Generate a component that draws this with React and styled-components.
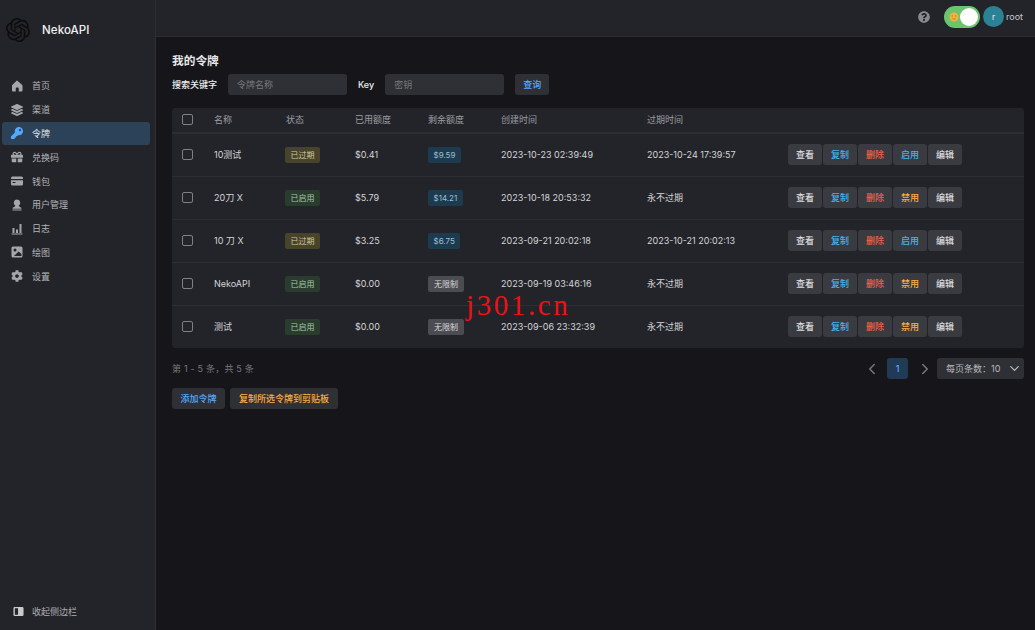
import React from 'react';
import styled, { createGlobalStyle } from 'styled-components';
import { SiOpenai } from 'react-icons/si';
import { FaLayerGroup, FaKey, FaGift, FaCog, FaQuestionCircle } from 'react-icons/fa';
import { ChevronLeft, ChevronRight, ChevronDown } from 'lucide-react';

const Global = createGlobalStyle`
  html, body { margin: 0; padding: 0; background: #16161a; }
  body { font-family: Inter, "Noto Sans CJK SC", sans-serif; -webkit-font-smoothing: antialiased; }
  * { box-sizing: border-box; }
`;
const Page = styled.div`display: flex; width: 1035px; height: 630px; overflow: hidden; position: relative; background: #16161a;`;
const Sidebar = styled.aside`width: 156px; flex: none; height: 100%; background: #232429; border-right: 1px solid #2e2f34; display: flex; flex-direction: column;`;
const Brand = styled.div`height: 74px; padding: 0 0 14px 6px; display: flex; align-items: center; gap: 12px; color: #f0f0f2; font-size: 11.5px; font-weight: 500; letter-spacing: .1px;`;
const Menu = styled.nav`padding: 0 5px 0 2px; display: flex; flex-direction: column;`;
const Item = styled.div`height: 23.8px; border-radius: 3px; display: flex; align-items: center; gap: 9px; padding-left: 9px; font-size: 9px; color: ${p => p.$active ? '#e4e6ea' : '#b4b5b8'}; background: ${p => p.$active ? '#2c4259' : 'transparent'};
  svg { width: 12px; height: 12px; flex: none; color: ${p => p.$active ? '#54a9ff' : '#a5a6a9'}; fill: currentColor; }`;
const Collapse = styled.div`margin-top: auto; height: 38px; padding-left: 13px; display: flex; align-items: center; gap: 8px; font-size: 9px; color: #aeafb2;
  svg { width: 11px; height: 11px; flex: none; fill: #c9cacc; }`;
const Body = styled.div`flex: 1; min-width: 0; display: flex; flex-direction: column;`;
const Header = styled.header`height: 37px; flex: none; background: #232429; border-bottom: 1px solid #2b2c31; display: flex; align-items: center; justify-content: flex-end; padding: 0 12px 3px 0; color: #c9cacc; font-size: 9px;`;
const Help = styled.span`display: flex; color: #8a8b8f; margin-right: 14px; font-size: 12px;`;
const Toggle = styled.div`position: relative; width: 36px; height: 22px; border-radius: 11px; background: #6cc46e; margin-right: 3px;`;
const Knob = styled.span`position: absolute; right: 2px; top: 2px; width: 18px; height: 18px; border-radius: 50%; background: #fff;`;
const Sun = styled.svg`position: absolute; left: 5px; top: 6px; width: 10px; height: 10px;`;
const Avatar = styled.div`width: 21px; height: 21px; border-radius: 50%; background: #2a8294; color: #e8eef0; display: flex; align-items: center; justify-content: center; font-size: 8.5px; margin-right: 2px;`;
const Main = styled.main`padding: 11px 11px 0 16px;`;
const Title = styled.h1`margin: 0 0 4px; height: 22px; display: flex; align-items: center; font-size: 11.7px; font-weight: 600; color: #e8e8ea;`;
const Search = styled.div`display: flex; align-items: center; height: 21px; margin-bottom: 13px;`;
const Label = styled.label`font-size: 9px; font-weight: 500; color: #eeeef0; margin-right: ${p => p.$gap}px;`;
const Field = styled.div`width: 119px; height: 21px; border-radius: 3px; background: #2f3035; color: #77787c; font-size: 9px; padding-left: 9px; display: flex; align-items: center; margin-right: ${p => p.$gap}px;`;
const Btn = styled.button`height: 21px; border: 0; border-radius: 3px; padding: 0 ${p => p.$pad || 8}px; font: 500 9px Inter, "Noto Sans CJK SC", sans-serif; background: ${p => p.$bg || '#2f3035'}; color: ${p => p.$c || '#54a9ff'}; display: inline-flex; align-items: center; justify-content: center;`;
const Table = styled.div`background: #232429; border-radius: 3px; overflow: hidden;`;
const Row = styled.div`display: grid; grid-template-columns: 32px 72px 69px 73px 73px 146px 141px 1fr; align-items: center; height: ${p => p.$head ? 25.5 : 43}px; padding-left: 10px; font-size: 9px; color: ${p => p.$head ? '#9c9da1' : '#d4d5d7'}; border-bottom: ${p => p.$head ? '2px solid #2d2e33' : '1px solid #2d2e33'};
  &:last-child { border-bottom: 0; height: 42.5px; }`;
const Check = styled.span`display: block; width: 11px; height: 11px; border-radius: 2px; border: 1px solid #7f8084;`;
const Badge = styled.span`display: inline-flex; align-items: center; justify-content: center; height: 16px; border-radius: 2px; padding: 0 ${p => p.$pad || 5.5}px; font-size: 8px; margin-left: ${p => p.$flush ? 0 : -1}px; background: ${p => p.$bg}; color: ${p => p.$c};`;
const Actions = styled.div`display: flex; gap: 1px;`;
const Act = styled.button`width: 34px; height: 21px; border: 0; padding: 0; border-radius: 3px; background: #3a3b40; color: ${p => p.$c}; font: 500 9px Inter, "Noto Sans CJK SC", sans-serif;`;
const Pager = styled.div`display: flex; align-items: center; justify-content: space-between; margin-top: 10px; height: 21px;`;
const Count = styled.span`font-size: 9px; color: #77787c; letter-spacing: .2px;`;
const Pages = styled.div`display: flex; align-items: center; color: #77787c; font-size: 8px;`;
const Arrow = styled.span`display: flex; width: 11px; justify-content: center; margin: ${p => p.$m}; svg { flex: none; }`;
const Current = styled.span`width: 21px; height: 21px; border-radius: 3px; background: #213a55; color: #54a9ff; font-size: 9px; font-weight: 500; display: flex; align-items: center; justify-content: center;`;
const Size = styled.div`width: 87px; height: 21px; border-radius: 3px; background: #2f3035; color: #b9babd; font-size: 9px; display: flex; align-items: center; justify-content: space-between; padding: 0 2px 0 9px; svg { color: #b9babd; }`;
const Footer = styled.div`display: flex; gap: 5px; margin-top: 9px;`;
const Mark = styled.div`position: absolute; left: 466px; top: 289px; font: 29px "Liberation Serif", serif; letter-spacing: 2.6px; color: #ee1016; white-space: nowrap;`;

const Home = () => <svg viewBox="0 0 24 24"><path d="M10.600 1.800a2 2 0 0 1 2.800 0l9 8.400c.4.4.6.900.6 1.500V21a2 2 0 0 1-2 2h-5.500v-6.500a1.500 1.500 0 0 0-1.500-1.500h-3A1.500 1.500 0 0 0 9.500 16.500V23H4a2 2 0 0 1-2-2v-9.300c0-.6.2-1.100.6-1.500z"/></svg>;
const Bars = () => <svg viewBox="0 0 24 24"><path d="M1 21h22v2H1zM3 10h4v10H3zM10 13h4v7h-4zM17 2h4v18h-4z"/></svg>;
const Card = () => <svg viewBox="0 0 24 24"><path fillRule="evenodd" d="M3 3h18a3 3 0 0 1 3 3v2H0V6a3 3 0 0 1 3-3zM0 10.500h24V18a3 3 0 0 1-3 3H3a3 3 0 0 1-3-3zm3 3.500v2h6v-2z"/></svg>;
const Person = () => <svg viewBox="0 0 24 24"><path d="M12 1a6.500 6.500 0 0 1 3.600 11.900c-.3 1.300.2 2.100 1.400 2.600 2 .6 4 1.500 4 4H3c0-2.500 2-3.400 4-4 1.200-.5 1.700-1.300 1.400-2.600A6.500 6.500 0 0 1 12 1zM3 21h18v2.200H3z"/></svg>;
const Pic = () => <svg viewBox="0 0 24 24"><path fillRule="evenodd" d="M4 1h16a3 3 0 0 1 3 3v16a3 3 0 0 1-3 3H4a3 3 0 0 1-3-3V4a3 3 0 0 1 3-3zm4 4a3 3 0 1 0 0 6 3 3 0 0 0 0-6zm7 6-9 9h15v-4z"/></svg>;
const Split = () => <svg viewBox="0 0 24 24"><path fillRule="evenodd" d="M4 2h16a3 3 0 0 1 3 3v14a3 3 0 0 1-3 3H4a3 3 0 0 1-3-3V5a3 3 0 0 1 3-3zm0 3v14h7V5z"/></svg>;

const menu = [
  [<Home />, '首页'], [<FaLayerGroup />, '渠道'], [<FaKey />, '令牌', true], [<FaGift />, '兑换码'],
  [<Card />, '钱包'], [<Person />, '用户管理'], [<Bars />, '日志'], [<Pic />, '绘图'], [<FaCog />, '设置'],
];
const Y = ['已过期', '#48432b', '#d3ca98'];
const G = ['已启用', '#2a3c2e', '#a8c8ab'];
const rows = [
  ['10测试', Y, '$0.41', '$9.59', '2023-10-23 02:39:49', '2023-10-24 17:39:57', '启用'],
  ['20刀 X', G, '$5.79', '$14.21', '2023-10-18 20:53:32', '永不过期', '禁用'],
  ['10 刀 X', Y, '$3.25', '$6.75', '2023-09-21 20:02:18', '2023-10-21 20:02:13', '启用'],
  ['NekoAPI', G, '$0.00', null, '2023-09-19 03:46:16', '永不过期', '禁用'],
  ['测试', G, '$0.00', null, '2023-09-06 23:32:39', '永不过期', '禁用'],
];

export default function App() {
  return (
    <Page>
      <Global />
      <Sidebar>
        <Brand><SiOpenai size={24} color="#0c0c0e" />NekoAPI</Brand>
        <Menu>
          {menu.map(([icon, text, active]) => <Item key={text} $active={active}>{icon}{text}</Item>)}
        </Menu>
        <Collapse><Split />收起侧边栏</Collapse>
      </Sidebar>
      <Body>
        <Header>
          <Help><FaQuestionCircle /></Help>
          <Toggle>
            <Sun viewBox="0 0 20 20"><circle cx="10" cy="10" r="9" fill="#f2b23e" /><path d="M5 8h3M12 8h3M7 13c2 1.500 4 1.500 6 0" stroke="#a86a1c" strokeWidth="1.500" fill="none" /></Sun>
            <Knob />
          </Toggle>
          <Avatar>r</Avatar>
          root
        </Header>
        <Main>
          <Title>我的令牌</Title>
          <Search>
            <Label $gap={11}>搜索关键字</Label>
            <Field $gap={11}>令牌名称</Field>
            <Label $gap={11}>Key</Label>
            <Field $gap={11}>密钥</Field>
            <Btn>查询</Btn>
          </Search>
          <Table>
            <Row $head>
              <Check /><span>名称</span><span>状态</span><span>已用额度</span><span>剩余额度</span><span>创建时间</span><span>过期时间</span><span />
            </Row>
            {rows.map(r => (
              <Row key={r[0]}>
                <Check />
                <span>{r[0]}</span>
                <span><Badge $bg={r[1][1]} $c={r[1][2]}>{r[1][0]}</Badge></span>
                <span>{r[2]}</span>
                <span>{r[3] ? <Badge $flush $bg="#1d3a4e" $c="#9cc0d4">{r[3]}</Badge> : <Badge $flush $pad={6} $bg="#4b4c52" $c="#d8d8da">无限制</Badge>}</span>
                <span>{r[4]}</span>
                <span>{r[5]}</span>
                <Actions>
                  <Act $c="#dcdcde">查看</Act>
                  <Act $c="#40b4f3">复制</Act>
                  <Act $c="#f0624c">删除</Act>
                  <Act $c={r[6] === '启用' ? '#40b4f3' : '#ffae43'}>{r[6]}</Act>
                  <Act $c="#dcdcde">编辑</Act>
                </Actions>
              </Row>
            ))}
          </Table>
          <Pager>
            <Count>第 1 - 5 条，共 5 条</Count>
            <Pages>
              <Arrow $m="0 10px 0 0"><ChevronLeft size={18} /></Arrow>
              <Current>1</Current>
              <Arrow $m="0 7px 0 11px"><ChevronRight size={18} /></Arrow>
              <Size>每页条数：10<ChevronDown size={15} /></Size>
            </Pages>
          </Pager>
          <Footer>
            <Btn $pad={8.5}>添加令牌</Btn>
            <Btn $c="#ffae43" $pad={9}>复制所选令牌到剪贴板</Btn>
          </Footer>
        </Main>
      </Body>
      <Mark>j301.cn</Mark>
    </Page>
  );
}
